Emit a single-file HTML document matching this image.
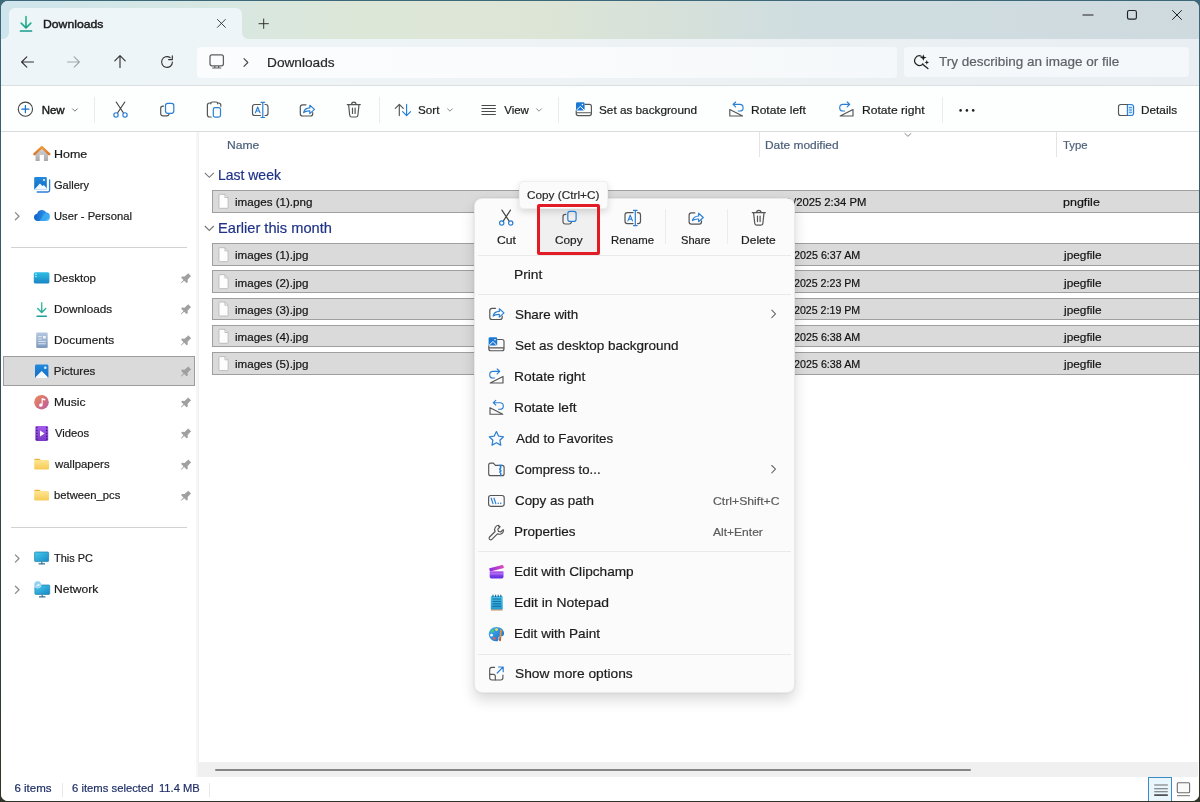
<!DOCTYPE html>
<html lang="en">
<head>
<meta charset="utf-8">
<title>Downloads - File Explorer</title>
<style>
*{box-sizing:border-box;margin:0;padding:0}
html,body{width:1200px;height:802px;overflow:hidden}
body{background:#2f4a4a;font-family:"Liberation Sans",sans-serif;font-size:12px;color:#1b1b1b;position:relative}
#desk{position:absolute;left:0;top:0;width:1200px;height:802px;background:linear-gradient(180deg,#3d687a 0,#34505a 45%,#2f3526 100%)}
#win{position:absolute;left:1px;top:1.300px;width:1198.200px;height:799.500px;border-radius:7px;overflow:hidden;background:#fff}
#o{position:absolute;left:-1px;top:-1.300px;width:1200px;height:802px;will-change:transform}
#o div,#o svg,#o span{position:absolute}
#titlebar{left:0;top:0;width:1200px;height:39px;background:linear-gradient(90deg,#cfe5ed 0,#d5e7e5 14%,#dde7d8 30%,#dde5d6 45%,#d5e0db 58%,#cfdde1 68%,#cfdadf 100%)}
#tab{left:9px;top:8px;width:233px;height:32px;background:#eef5f8;border-radius:6px 6px 0 0}
#navbar{left:0;top:39px;width:1200px;height:47px;background:linear-gradient(90deg,#eef5f8 0,#eef4f5 40%,#e8eef1 100%)}
#addr{left:196.500px;top:46.800px;width:700.500px;height:30.800px;background:linear-gradient(90deg,#fafcfd 0,#f9fbfc 50%,#f5f8fa 100%);border-radius:4px}
#search{left:904px;top:47.200px;width:284.500px;height:29.800px;background:#f4f8fa;border-radius:4px}
#toolbar{left:0;top:85px;width:1200px;height:47px;background:#fdfefe;border-top:1px solid #dcdfe0;border-bottom:1px solid #d9dcde}
#sidebar{left:0;top:132px;width:198px;height:645px;background:#fff}
#content{left:198px;top:132px;width:1002px;height:645px;background:#fff;border-left:1px solid #f0f0f0}
#status{left:0;top:777px;width:1200px;height:25px;background:#fff}
.t{white-space:nowrap;line-height:normal;transform-origin:0 0;-webkit-text-stroke:.2px}
.vsep{width:1px;background:#ebebeb}
svg{overflow:visible}
.k{fill:none;stroke:#3c3c3c;stroke-width:1;stroke-linecap:round;stroke-linejoin:round}
.b{fill:none;stroke:#2b7fd3;stroke-width:1;stroke-linecap:round;stroke-linejoin:round}
</style>
</head>
<body>
<div id="desk"></div>
<div id="win">
<div id="o">
<!-- title bar -->
<div id="titlebar"></div>
<div id="tab"></div>
<div style="left:3px;top:33px;width:6px;height:6px;background:radial-gradient(circle at 0 0,transparent 5.500px,#eef5f8 6px)"></div>
<div style="left:242px;top:33px;width:6px;height:6px;background:radial-gradient(circle at 100% 0,transparent 5.500px,#eef5f8 6px)"></div>
<svg style="left:17.500px;top:14.500px" width="16" height="18" viewBox="0 0 16 18"><defs><linearGradient id="gdl" x1="0" y1="0" x2="0" y2="1"><stop offset="0" stop-color="#2fbf8e"/><stop offset="1" stop-color="#179a8c"/></linearGradient></defs><path d="M8 1.5v11M3.2 8.2L8 13l4.800-4.800M2.500 16h11" fill="none" stroke="url(#gdl)" stroke-width="1.700" stroke-linecap="round" stroke-linejoin="round"/></svg>
<svg style="left:216.800px;top:19.200px" width="8.800" height="8.800" viewBox="0 0 10 10"><path d="M0.500 0.500l9 9M9.500 0.500l-9 9" class="k" style="stroke:#2a2a2a"/></svg>
<svg style="left:259.300px;top:19.200px" width="9.400" height="9.400" viewBox="0 0 10 10"><path d="M5 0v10M0 5h10" class="k" style="stroke:#2a2a2a"/></svg>
<svg style="left:1083.300px;top:13.900px" width="10" height="2" viewBox="0 0 10 2"><path d="M0 1h10" class="k" style="stroke:#222;stroke-width:1.200"/></svg>
<svg style="left:1127.100px;top:9.900px" width="10" height="10" viewBox="0 0 10 10"><rect x="0.500" y="0.500" width="8.900" height="8.600" rx="1.700" class="k" style="stroke:#222;stroke-width:1.150"/></svg>
<svg style="left:1171.800px;top:9.900px" width="10" height="10" viewBox="0 0 10 10"><path d="M0.500 0.500l9 9M9.500 0.500l-9 9" class="k" style="stroke:#222"/></svg>
<!-- nav bar -->
<div id="navbar"></div>
<div id="addr"></div>
<div id="search"></div>
<svg style="left:21px;top:55.600px" width="13" height="12" viewBox="0 0 13 12"><path d="M12.500 6H0.800M5.800 0.800L0.600 6l5.200 5.200" class="k" style="stroke:#333;stroke-width:1.150"/></svg>
<svg style="left:67px;top:55.600px" width="13" height="12" viewBox="0 0 13 12"><path d="M0.500 6h11.700M7.200 0.800L12.400 6l-5.200 5.200" class="k" style="stroke:#a3a8aa;stroke-width:1.150"/></svg>
<svg style="left:114px;top:55px" width="12" height="13" viewBox="0 0 12 13"><path d="M6 12.500V0.800M0.800 5.800L6 0.600l5.200 5.200" class="k" style="stroke:#333;stroke-width:1.150"/></svg>
<svg style="left:160px;top:55px" width="14" height="14" viewBox="0 0 14 14"><path d="M12.400 7a5.400 5.400 0 1 1-2.300-4.420M12.300 0.900v3.700h-3.700" class="k" style="stroke:#333;stroke-width:1.150"/></svg>
<svg style="left:209px;top:54px" width="16" height="15" viewBox="209 54 16 15"><rect x="210" y="54.900" width="13.400" height="10.900" rx="2" class="k" style="stroke:#5e5e5e;stroke-width:1.250"/><path d="M212.200 68h9M214.800 66v1.800M218.600 66v1.800" class="k" style="stroke:#5e5e5e;stroke-width:1.200;stroke-linecap:butt"/></svg>
<svg style="left:243px;top:58px" width="6" height="9" viewBox="0 0 6 9"><path d="M1 0.700L4.800 4.500 1 8.300" class="k" style="stroke:#444;stroke-width:1.100"/></svg>
<svg style="left:913px;top:54px" width="17" height="16" viewBox="913 54 17 16"><path d="M921.300 56.200a4.800 4.800 0 1 0 1.700 7.700" class="k" style="stroke:#222;stroke-width:1.200"/><path d="M922.600 64.200l5.300 4.400" class="k" style="stroke:#222;stroke-width:1.300"/><path d="M923.30 54.30L924.18 56.72L926.60 57.60L924.18 58.48L923.30 60.90L922.42 58.48L920.00 57.60L922.42 56.72z" fill="#1c1c1c"/><path d="M926.80 60.10L927.44 61.76L929.10 62.40L927.44 63.04L926.80 64.70L926.16 63.04L924.50 62.40L926.16 61.76z" fill="#1c1c1c"/></svg>
<!-- toolbar -->
<div id="toolbar"></div>
<svg style="left:0;top:94px" width="1200" height="32" viewBox="0 94 1200 32">
<!-- New -->
<circle cx="25.400" cy="109.200" r="7.100" class="k" style="stroke:#444;stroke-width:1.100"/>
<path d="M25.400 105.700v7M21.900 109.200h7" class="b" style="stroke:#1470c8;stroke-width:1.200"/>
<path d="M72.500 108.800l2.400 2.400 2.400-2.400" class="k" style="stroke:#7a7a7a"/>
<!-- Cut -->
<g id="i-cut">
<path d="M116.200 102l7.300 11M124.800 102l-7.300 11" class="k" style="stroke:#444;stroke-width:1.150"/>
<circle cx="116" cy="114.900" r="2.150" class="b" style="stroke-width:1.200"/><circle cx="125" cy="114.900" r="2.150" class="b" style="stroke-width:1.200"/>
</g>
<!-- Copy -->
<g id="i-copy">
<path d="M163.600 106.200h-0.700a2.200 2.200 0 0 0-2.200 2.200v5.300a2.200 2.200 0 0 0 2.200 2.200h4a2.200 2.200 0 0 0 2.200-2.200" class="k" style="stroke:#555;stroke-width:1.200"/>
<rect x="165.500" y="103.300" width="8.300" height="10" rx="2.200" class="b" style="stroke-width:1.200"/>
</g>
<!-- Paste -->
<path d="M211.200 117h-1.600a2.200 2.200 0 0 1-2.200-2.200v-9.600a2.200 2.200 0 0 1 2.200-2.200h1M217.600 103h1a2.200 2.200 0 0 1 2.200 2.200v1" class="k" style="stroke:#555;stroke-width:1.200"/>
<path d="M210.800 103.800v-0.400a1.400 1.400 0 0 1 1.400-1.400h4a1.400 1.400 0 0 1 1.400 1.400v0.400" class="k" style="stroke:#555;stroke-width:1.200"/>
<rect x="213.300" y="107.700" width="7.200" height="9.400" rx="1.800" class="b" style="stroke-width:1.200"/>
<!-- Rename -->
<g id="i-ren">
<path d="M260.600 104.500h-5.800a2.300 2.300 0 0 0-2.300 2.300v6.400a2.300 2.300 0 0 0 2.300 2.300h5.800M265 104.500h0.700a2.300 2.300 0 0 1 2.300 2.300v6.400a2.300 2.300 0 0 1-2.300 2.300h-0.700" class="k" style="stroke:#555;stroke-width:1.200"/>
<path d="M262.800 102.500v15M261 102.300h3.600M261 117.500h3.600" class="b" style="stroke-width:1.200"/>
<path d="M255.400 112.800l2.300-5.800 2.300 5.800M256.200 111h3" class="b" style="stroke-width:1.100"/>
</g>
<!-- Share -->
<g id="i-share">
<path d="M306 104.800h-3.400a2.300 2.300 0 0 0-2.300 2.300v6.600a2.300 2.300 0 0 0 2.300 2.300h7.800a2.300 2.300 0 0 0 2.300-2.300v-1" class="k" style="stroke:#555;stroke-width:1.200"/>
<path d="M303.600 112.600c0.600-3 2.800-4.600 6.200-4.700v-2.700l4.700 4.200-4.700 4.200v-2.700c-2.800-.1-4.800.4-6.200 1.700z" class="b" style="stroke-width:1.150"/>
</g>
<!-- Delete -->
<g id="i-del">
<path d="M347.300 104.600h13M351.600 104.400a2.200 2.200 0 0 1 4.400 0M348.600 104.800l1.100 10.400a2 2 0 0 0 2 1.800h4.200a2 2 0 0 0 2-1.800l1.100-10.400" class="k" style="stroke:#555;stroke-width:1.200"/>
<path d="M352.500 108v5.500M355.100 108v5.500" class="k" style="stroke:#555;stroke-width:1.200"/>
</g>
<!-- Sort -->
<path d="M399.300 115.600v-11M395.300 108.400l4-4 4 4" class="k" style="stroke:#555;stroke-width:1.150"/>
<path d="M406.600 104.400v11M402.600 111.600l4 4 4-4" class="b" style="stroke:#1f7fd6;stroke-width:1.150"/>
<path d="M447.600 108.800l2.400 2.400 2.400-2.400" class="k" style="stroke:#8a8a8a"/>
<!-- View -->
<path d="M481.500 105.500h14.300M481.500 108.500h14.300M481.500 111.500h14.300M481.500 114.500h14.300" class="k" style="stroke:#4a4a4a;stroke-width:1.100;stroke-linecap:butt"/>
<path d="M536.600 108.800l2.400 2.400 2.400-2.400" class="k" style="stroke:#8a8a8a"/>
<!-- Set as background -->
<g id="i-bg">
<path d="M585 104.400h4.400a2 2 0 0 1 2 2v7.200a2 2 0 0 1-2 2h-11.200a2 2 0 0 1-2-2v-3M576.200 112.700h15.200" class="k" style="stroke:#555;stroke-width:1.150"/>
<rect x="576" y="102.200" width="8.600" height="8.300" rx="1.400" fill="#1a78d2"/>
<path d="M576.600 110l3.700-3.600 3.700 3.600" fill="none" stroke="#fff" stroke-width="1"/><circle cx="582.400" cy="104.600" r="0.800" fill="#fff"/>
</g>
<!-- Rotate left -->
<g id="i-rl">
<path d="M729.800 109.400v6.600h12.800z" class="k" style="stroke:#555;stroke-width:1.150"/>
<path d="M733.300 104.400h6.500a3.300 3.300 0 0 1 0 6.600h-1.500M735.600 102l-2.500 2.400 2.500 2.400" class="b" style="stroke-width:1.150"/>
</g>
<!-- Rotate right -->
<g id="i-rr">
<path d="M853 109.400v6.600h-12.800z" class="k" style="stroke:#555;stroke-width:1.150"/>
<path d="M849.500 104.400h-6.500a3.300 3.300 0 0 0 0 6.600h1.500M847.200 102l2.500 2.400-2.500 2.400" class="b" style="stroke-width:1.150"/>
</g>
<!-- more -->
<circle cx="960.600" cy="110.400" r="1.300" fill="#222"/><circle cx="966.900" cy="110.400" r="1.300" fill="#222"/><circle cx="973.200" cy="110.400" r="1.300" fill="#222"/>
<!-- Details -->
<path d="M1127.400 104.500h3.900a2.300 2.300 0 0 1 2.300 2.300v6.400a2.300 2.300 0 0 1-2.300 2.300h-3.900z" fill="#d6ebfb" stroke="#2b7fd3" stroke-width="1.150"/>
<path d="M1127.400 104.500h-6.600a2.300 2.300 0 0 0-2.300 2.300v6.400a2.300 2.300 0 0 0 2.300 2.300h6.600" class="k" style="stroke:#555;stroke-width:1.150"/>
<path d="M1129.300 107.700h2.300M1129.300 110h2.300M1129.300 112.300h2.300" class="b" style="stroke-width:0.900"/>
</svg>
<div class="vsep" style="left:94px;top:97px;height:26px"></div>
<div class="vsep" style="left:379px;top:97px;height:26px"></div>
<div class="vsep" style="left:558px;top:97px;height:26px"></div>
<div class="vsep" style="left:942px;top:97px;height:26px;background:#ececec"></div>

<!-- sidebar -->
<div id="sidebar"></div>
<div style="left:196px;top:132px;width:3px;height:645px;background:#f6f6f6"></div>
<div style="left:3px;top:356px;width:192px;height:30px;background:#dadada;border:1px solid #9c9c9c"></div>
<div style="left:11px;top:247px;width:176px;height:1px;background:#d2d2d2"></div>
<div style="left:11px;top:527px;width:176px;height:1px;background:#d2d2d2"></div>
<svg style="left:0;top:132px" width="198" height="480" viewBox="0 132 198 480">
<defs>
<linearGradient id="gor" x1="0" y1="0" x2="0" y2="1"><stop offset="0" stop-color="#f0993a"/><stop offset="1" stop-color="#d8742a"/></linearGradient>
<linearGradient id="ggr" x1="0" y1="0" x2="0" y2="1"><stop offset="0" stop-color="#d6d6d6"/><stop offset="1" stop-color="#a9a9a9"/></linearGradient>
<linearGradient id="gbl" x1="0" y1="0" x2="0" y2="1"><stop offset="0" stop-color="#2489dc"/><stop offset="1" stop-color="#0f6cc4"/></linearGradient>
<linearGradient id="gcl" x1="0" y1="0" x2="1" y2="0"><stop offset="0" stop-color="#0f5fc8"/><stop offset="1" stop-color="#38a4f2"/></linearGradient>
<linearGradient id="gdk" x1="0" y1="0" x2="0" y2="1"><stop offset="0" stop-color="#2fbfe6"/><stop offset="1" stop-color="#1a86c4"/></linearGradient>
<linearGradient id="gdn" x1="0" y1="0" x2="0" y2="1"><stop offset="0" stop-color="#3cc79a"/><stop offset="1" stop-color="#1f9f98"/></linearGradient>
<linearGradient id="gdc" x1="0" y1="0" x2="0" y2="1"><stop offset="0" stop-color="#b4c8df"/><stop offset="1" stop-color="#7d99bc"/></linearGradient>
<linearGradient id="gmu" x1="0" y1="0" x2="1" y2="1"><stop offset="0" stop-color="#ee8a52"/><stop offset="1" stop-color="#b85aa6"/></linearGradient>
<linearGradient id="gvi" x1="0" y1="0" x2="0" y2="1"><stop offset="0" stop-color="#a45cec"/><stop offset="1" stop-color="#7a38c6"/></linearGradient>
<linearGradient id="gfo" x1="0" y1="0" x2="0" y2="1"><stop offset="0" stop-color="#ffe592"/><stop offset="1" stop-color="#f6cb55"/></linearGradient>
<linearGradient id="gpc" x1="0" y1="0" x2="1" y2="1"><stop offset="0" stop-color="#45cdee"/><stop offset="1" stop-color="#1a87c6"/></linearGradient>
<g id="pin"><path d="M188.200 273.200l3 3-1 .600-2.600 2.900.2 2.600-1.300.7-2.300-2.300-2.800 2.600-.5-.5 2.600-2.800-2.300-2.300.7-1.300 2.600.2 2.900-2.600z" fill="#a0a0a0"/></g>
<g id="fold"><path d="M34.200 460a1.300 1.300 0 0 1 1.300-1.300h3.900l1.500 1.400h-6.700z" fill="#e9b53a"/><path d="M34.200 460h13.700a1.100 1.100 0 0 1 1.100 1.100v7.400a1.100 1.100 0 0 1-1.100 1.100h-12.600a1.100 1.100 0 0 1-1.100-1.100z" fill="url(#gfo)"/></g>
<g id="chev"><path d="M15.400 212.600l3.600 3.600-3.600 3.600" fill="none" stroke="#8c8c8c" stroke-width="1.300" stroke-linecap="round" stroke-linejoin="round"/></g>
</defs>
<!-- Home -->
<path d="M35.500 153.300l6.300-5.600 6.300 5.600v7.100a.7.700 0 0 1-.7.700h-11.200a.7.700 0 0 1-.7-.7z" fill="url(#ggr)"/><rect x="39.700" y="154.800" width="4.200" height="6.300" fill="#fff"/>
<path d="M34.400 154.200l7.400-7 7.400 7" fill="none" stroke="url(#gor)" stroke-width="2.500" stroke-linecap="round" stroke-linejoin="round"/>
<!-- Gallery -->
<path d="M37.200 192h10.600a1.800 1.800 0 0 0 1.800-1.800v-10.400" fill="none" stroke="#2a7fd6" stroke-width="1.300" stroke-linecap="round"/>
<rect x="34.200" y="177" width="12.600" height="12.800" rx="1.300" fill="url(#gbl)"/>
<path d="M34.600 189.200l5.300-5.600 2.600 2.500 1.300-1.100 3 3.200v.5a1.100 1.100 0 0 1-1.100 1.100h-10a1.100 1.100 0 0 1-1.100-.6z" fill="#f2f8ff"/><circle cx="44" cy="180" r="1.100" fill="#e6f3ff"/>
<!-- OneDrive -->
<path d="M37.700 221a3.700 3.700 0 0 1-.6-7.350 5.100 5.100 0 0 1 9.300-1.150 3.700 3.700 0 0 1 .5 7.300 3 3 0 0 1-1.600 1.200z" fill="url(#gcl)"/>
<path d="M39.500 221l4.200-6.800a3.700 3.700 0 0 1 5.900 3.600 3 3 0 0 1-2.700 3.200z" fill="#3fb0f6" opacity=".75"/>
<use href="#chev"/>
<!-- Desktop -->
<rect x="33.800" y="272.200" width="15.600" height="11.200" rx="1.500" fill="url(#gdk)"/><rect x="35" y="273.500" width="1.800" height="1.500" fill="#8fe4f8"/><rect x="35" y="276" width="1.800" height="1.200" fill="#8fe4f8"/>
<!-- Downloads -->
<path d="M41.700 302.800v9.400M37.700 308.600l4 4 4-4M37 316.200h9.400" fill="none" stroke="url(#gdn)" stroke-width="1.400" stroke-linecap="round" stroke-linejoin="round"/>
<!-- Documents -->
<rect x="36.200" y="332.600" width="11.500" height="15.400" rx="1.200" fill="url(#gdc)"/><path d="M38.200 336.600h3.600M38.200 339h3.600M38.200 341.400h7.500M38.200 343.800h7.500" stroke="#e8eff8" stroke-width=".9" fill="none"/><rect x="43" y="336" width="2.800" height="2.500" fill="#f2f6fb"/>
<!-- Pictures -->
<rect x="35" y="364.600" width="13.400" height="13.400" rx="1.300" fill="url(#gbl)"/>
<path d="M35.400 377.300l6.300-6.400 6.300 6.400a1.300 1.300 0 0 1-.9.700h-10.800a1.300 1.300 0 0 1-.9-.7z" fill="#f4f9ff"/><circle cx="45.300" cy="367.700" r="1.200" fill="#e9f4ff"/>
<!-- Music -->
<circle cx="41.500" cy="402.200" r="7.300" fill="url(#gmu)"/><path d="M42.700 405.100a1.800 1.600 0 1 1-1.100-1.500v-5.500l3.700.9v1.600l-2.600-.6z" fill="#fff"/>
<!-- Videos -->
<rect x="35.300" y="426" width="12.900" height="15" rx="1.400" fill="url(#gvi)"/><path d="M40 430.500v6l4.600-3z" fill="#fff"/>
<path d="M36.200 427.600h1.300M36.200 430.500h1.300M36.200 433.400h1.300M36.200 436.300h1.300M36.200 439.200h1.300M46 427.600h1.300M46 430.500h1.300M46 433.400h1.300M46 436.300h1.300M46 439.200h1.300" stroke="#3a1878" stroke-width="1.300" fill="none"/>
<!-- folders -->
<use href="#fold"/><use href="#fold" y="31"/>
<!-- This PC -->
<path d="M38.600 563.900h6.400M41.800 561.600v2.200" stroke="#3a6e88" stroke-width="1.100" fill="none"/><rect x="34.600" y="552" width="14" height="9.600" rx=".8" fill="url(#gpc)" stroke="#1d7fa8" stroke-width=".7"/>
<use href="#chev" y="342.300"/>
<!-- Network -->
<path d="M39 596.900h6.400M42.200 594.400v2.400" stroke="#3a6e88" stroke-width="1.100" fill="none"/><rect x="34.900" y="585" width="14.800" height="9.400" rx=".8" fill="url(#gpc)" stroke="#1d7fa8" stroke-width=".7"/>
<circle cx="37.700" cy="584.600" r="3.500" fill="#8fd0f2" stroke="#d8f0fc" stroke-width=".6"/><path d="M35.600 586.400l3-2.800 1.500 1.800z" fill="#e8f7ff"/>
<use href="#chev" y="373.600"/>
<!-- pins -->
<use href="#pin"/><use href="#pin" y="31.070"/><use href="#pin" y="62.140"/><use href="#pin" y="93.200"/><use href="#pin" y="124.300"/><use href="#pin" y="155.350"/><use href="#pin" y="186.400"/><use href="#pin" y="217.500"/>
</svg>

<!-- content pane -->
<div id="content"></div>
<div style="left:759px;top:132px;width:1px;height:24.500px;background:#e4e4e4"></div>
<div style="left:1056px;top:132px;width:1px;height:24.500px;background:#e4e4e4"></div>
<div style="left:212px;top:189.9px;width:990px;height:22.8px;background:#dadada;border:1px solid #9f9f9f"></div>
<div style="left:212px;top:243.3px;width:990px;height:22.5px;background:#dadada;border:1px solid #9f9f9f"></div>
<div style="left:212px;top:270.3px;width:990px;height:22.5px;background:#dadada;border:1px solid #9f9f9f"></div>
<div style="left:212px;top:297.6px;width:990px;height:22.5px;background:#dadada;border:1px solid #9f9f9f"></div>
<div style="left:212px;top:324.9px;width:990px;height:22.5px;background:#dadada;border:1px solid #9f9f9f"></div>
<div style="left:212px;top:352.2px;width:990px;height:22.5px;background:#dadada;border:1px solid #9f9f9f"></div>
<svg style="left:198px;top:132px" width="1002" height="260" viewBox="198 132 1002 260">
<defs><g id="doc"><path d="M219.500 194.300h5.400l3.200 3.200v10.300a.5.500 0 0 1-.5.500h-8.100a.5.500 0 0 1-.5-.5v-13a.5.500 0 0 1 .5-.5z" fill="#fdfdfd" stroke="#b9b9b9" stroke-width=".9"/><path d="M224.900 194.500v3h3" fill="none" stroke="#b9b9b9" stroke-width=".9"/></g></defs>
<path d="M904.600 133.300l3.300 3 3.300-3" fill="none" stroke="#8a8a8a" stroke-width="1"/>
<path d="M204.800 172.800l4.500 4.500 4.500-4.500" fill="none" stroke="#767676" stroke-width="1.100"/>
<path d="M204.800 226l4.500 4.500 4.500-4.500" fill="none" stroke="#767676" stroke-width="1.100"/>
<use href="#doc" y="0.0"/>
<use href="#doc" y="53.4"/>
<use href="#doc" y="80.4"/>
<use href="#doc" y="107.7"/>
<use href="#doc" y="135.0"/>
<use href="#doc" y="162.3"/>
</svg>

<!-- scrollbar + status bar -->
<div style="left:199px;top:762px;width:999px;height:15px;background:#f0f0f0"></div>
<div style="left:215px;top:768.500px;width:756px;height:2px;background:#858585;border-radius:1px"></div>
<div id="status"></div>
<div style="left:62px;top:783px;width:1px;height:14px;background:#e8e8e8"></div>
<div style="left:209px;top:783px;width:1px;height:14px;background:#e8e8e8"></div>
<div style="left:1148px;top:777.300px;width:24px;height:26px;background:#eaf6fd;border:1.600px solid #3a8cc8"></div>
<svg style="left:1148px;top:778px" width="50" height="22" viewBox="1148 778 50 22">
<path d="M1154.200 785h13.600M1154.200 788.700h13.600M1154.200 791.800h13.600" fill="none" stroke="#6a6a6a" stroke-width="1.100"/><path d="M1154.200 795.100h13.600" fill="none" stroke="#333" stroke-width="1.500"/>
<rect x="1177.300" y="782.800" width="12.300" height="10" rx="1" fill="#fafafa" stroke="#6e6e6e" stroke-width="1.100"/><path d="M1177 795.700h12.900" fill="none" stroke="#6e6e6e" stroke-width="1"/>
</svg>

<!-- labels -->
<span class="t" style="left:42.50px;top:17.9px;font-size:11.5px;color:#1a1a1a;transform:scaleX(1.062);-webkit-text-stroke:0.42px #1a1a1a;">Downloads</span>
<span class="t" style="left:266.78px;top:54.8px;font-size:13px;color:#2a2a2a;transform:scaleX(1.052);">Downloads</span>
<span class="t" style="left:938.95px;top:53.8px;font-size:13.5px;color:#5c6266;">Try describing an image or file</span>
<span class="t" style="left:41.66px;top:104.4px;font-size:11.5px;color:#1a1a1a;-webkit-text-stroke:0.42px #1a1a1a;">New</span>
<span class="t" style="left:418.49px;top:104.4px;font-size:11.5px;transform:scaleX(1.014);">Sort</span>
<span class="t" style="left:504.20px;top:104.4px;font-size:11.5px;">View</span>
<span class="t" style="left:599.19px;top:104.4px;font-size:11.5px;transform:scaleX(1.022);">Set as background</span>
<span class="t" style="left:751.42px;top:104.4px;font-size:11.5px;transform:scaleX(1.045);">Rotate left</span>
<span class="t" style="left:861.61px;top:104.4px;font-size:11.5px;transform:scaleX(1.052);">Rotate right</span>
<span class="t" style="left:1141.34px;top:104.4px;font-size:11.5px;transform:scaleX(1.025);">Details</span>
<span class="t" style="left:53.69px;top:147.5px;font-size:11.5px;transform:scaleX(1.083);">Home</span>
<span class="t" style="left:54.16px;top:178.6px;font-size:11.5px;transform:scaleX(0.962);">Gallery</span>
<span class="t" style="left:53.85px;top:209.7px;font-size:11.5px;transform:scaleX(0.975);">User - Personal</span>
<span class="t" style="left:53.76px;top:271.8px;font-size:11.5px;">Desktop</span>
<span class="t" style="left:53.74px;top:302.9px;font-size:11.5px;transform:scaleX(1.022);">Downloads</span>
<span class="t" style="left:53.73px;top:334.0px;font-size:11.5px;transform:scaleX(1.034);">Documents</span>
<span class="t" style="left:53.76px;top:365.1px;font-size:11.5px;">Pictures</span>
<span class="t" style="left:53.72px;top:396.1px;font-size:11.5px;transform:scaleX(1.051);">Music</span>
<span class="t" style="left:54.70px;top:427.2px;font-size:11.5px;transform:scaleX(0.977);">Videos</span>
<span class="t" style="left:54.76px;top:458.3px;font-size:11.5px;transform:scaleX(0.993);">wallpapers</span>
<span class="t" style="left:54.03px;top:489.4px;font-size:11.5px;transform:scaleX(0.979);">between_pcs</span>
<span class="t" style="left:54.46px;top:551.5px;font-size:11.5px;transform:scaleX(0.952);">This PC</span>
<span class="t" style="left:53.72px;top:582.6px;font-size:11.5px;transform:scaleX(1.048);">Network</span>
<span class="t" style="left:226.81px;top:138.7px;font-size:11.5px;color:#4c607a;transform:scaleX(1.052);">Name</span>
<span class="t" style="left:765.23px;top:138.7px;font-size:11.5px;color:#4c607a;transform:scaleX(1.037);">Date modified</span>
<span class="t" style="left:1063.35px;top:138.7px;font-size:11.5px;color:#4c607a;transform:scaleX(0.987);">Type</span>
<span class="t" style="left:218.19px;top:165.7px;font-size:15px;color:#1e3287;transform:scaleX(0.931);">Last week</span>
<span class="t" style="left:218.14px;top:219.1px;font-size:15px;color:#1e3287;transform:scaleX(0.976);">Earlier this month</span>
<span class="t" style="left:234.74px;top:195.6px;font-size:11.5px;color:#111;transform:scaleX(1.010);">images (1).png</span>
<span class="t" style="left:765.63px;top:195.6px;font-size:11.5px;color:#111;transform:scaleX(1.133);">8/19</span>
<span class="t" style="left:792.90px;top:195.6px;font-size:11.5px;color:#111;transform:scaleX(0.980);">/2025 2:34 PM</span>
<span class="t" style="left:1062.85px;top:195.6px;font-size:11.5px;color:#111;transform:scaleX(1.087);">pngfile</span>
<span class="t" style="left:234.74px;top:249.4px;font-size:11.5px;color:#111;transform:scaleX(1.007);">images (1).jpg</span>
<span class="t" style="left:765.60px;top:249.4px;font-size:11.5px;color:#111;transform:scaleX(1.200);">8/6/</span>
<span class="t" style="left:794.27px;top:249.4px;font-size:11.5px;color:#111;transform:scaleX(0.934);">2025 6:37 AM</span>
<span class="t" style="left:1063.92px;top:249.4px;font-size:11.5px;color:#111;transform:scaleX(1.030);">jpegfile</span>
<span class="t" style="left:234.74px;top:276.6px;font-size:11.5px;color:#111;transform:scaleX(1.007);">images (2).jpg</span>
<span class="t" style="left:765.60px;top:276.6px;font-size:11.5px;color:#111;transform:scaleX(1.200);">8/5/</span>
<span class="t" style="left:794.28px;top:276.6px;font-size:11.5px;color:#111;transform:scaleX(0.925);">2025 2:23 PM</span>
<span class="t" style="left:1063.92px;top:276.6px;font-size:11.5px;color:#111;transform:scaleX(1.030);">jpegfile</span>
<span class="t" style="left:234.74px;top:303.7px;font-size:11.5px;color:#111;transform:scaleX(1.007);">images (3).jpg</span>
<span class="t" style="left:765.60px;top:303.7px;font-size:11.5px;color:#111;transform:scaleX(1.200);">8/5/</span>
<span class="t" style="left:794.28px;top:303.7px;font-size:11.5px;color:#111;transform:scaleX(0.925);">2025 2:19 PM</span>
<span class="t" style="left:1063.92px;top:303.7px;font-size:11.5px;color:#111;transform:scaleX(1.030);">jpegfile</span>
<span class="t" style="left:234.74px;top:330.9px;font-size:11.5px;color:#111;transform:scaleX(1.007);">images (4).jpg</span>
<span class="t" style="left:765.60px;top:330.9px;font-size:11.5px;color:#111;transform:scaleX(1.200);">8/4/</span>
<span class="t" style="left:794.27px;top:330.9px;font-size:11.5px;color:#111;transform:scaleX(0.934);">2025 6:38 AM</span>
<span class="t" style="left:1063.92px;top:330.9px;font-size:11.5px;color:#111;transform:scaleX(1.030);">jpegfile</span>
<span class="t" style="left:234.74px;top:358.0px;font-size:11.5px;color:#111;transform:scaleX(1.007);">images (5).jpg</span>
<span class="t" style="left:765.60px;top:358.0px;font-size:11.5px;color:#111;transform:scaleX(1.200);">8/4/</span>
<span class="t" style="left:794.27px;top:358.0px;font-size:11.5px;color:#111;transform:scaleX(0.934);">2025 6:38 AM</span>
<span class="t" style="left:1063.92px;top:358.0px;font-size:11.5px;color:#111;transform:scaleX(1.030);">jpegfile</span>
<span class="t" style="left:14.44px;top:782.3px;font-size:11.5px;color:#1f2f68;">6 items</span>
<span class="t" style="left:72.15px;top:782.3px;font-size:11.5px;color:#1f2f68;transform:scaleX(0.981);">6 items selected</span>
<span class="t" style="left:159.15px;top:782.3px;font-size:11.5px;color:#1f2f68;transform:scaleX(0.969);">11.4 MB</span>
<!-- context menu -->
<div style="left:474px;top:198px;width:320.500px;height:494.600px;background:#fbfbfb;border:1px solid rgba(0,0,0,.07);border-radius:8px;box-shadow:0 7px 14px rgba(0,0,0,.15),0 0 3px rgba(0,0,0,.07)"></div>
<div style="left:540px;top:206px;width:58px;height:47px;background:#f0f0f0"></div>
<div style="left:478px;top:255px;width:312.500px;height:1px;background:#e9e9e9"></div>
<div style="left:478px;top:293.500px;width:312.500px;height:1px;background:#e9e9e9"></div>
<div style="left:478px;top:551px;width:312.500px;height:1px;background:#e9e9e9"></div>
<div style="left:478px;top:653.500px;width:312.500px;height:1px;background:#e9e9e9"></div>
<div style="left:664.500px;top:209px;width:1px;height:35px;background:#ececec"></div>
<div style="left:727px;top:209px;width:1px;height:35px;background:#ececec"></div>
<!-- tooltip -->
<div style="left:519px;top:181px;width:89px;height:27.500px;background:#fbfbfb;border:1px solid #efefef;border-radius:4px;box-shadow:0 3px 7px rgba(0,0,0,.14)"></div>
<!-- highlight box -->
<div style="left:537.200px;top:204.200px;width:63.200px;height:50.400px;border:3.200px solid #e21b24;border-radius:2px"></div>
<svg style="left:474px;top:198px" width="320" height="494" viewBox="474 198 320 494">
<use href="#i-cut" x="385.700" y="108.100"/>
<use href="#i-copy" x="402.300" y="108.100"/>
<use href="#i-ren" x="372.500" y="108.100"/>
<use href="#i-share" x="388.800" y="108.100"/>
<use href="#i-del" x="405" y="108.100"/>
<use href="#i-share" x="189.500" y="203.500"/>
<use href="#i-bg" x="-87.400" y="235.100"/>
<use href="#i-rr" x="-350" y="267"/>
<use href="#i-rl" x="-239.800" y="298.300"/>
<!-- submenu chevrons -->
<path d="M771.800 310.200l3.700 3.700-3.700 3.700M771.800 465.500l3.700 3.700-3.700 3.700" fill="none" stroke="#6a6a6a" stroke-width="1.100" stroke-linecap="round" stroke-linejoin="round"/>
<!-- star -->
<path d="M496.400 431.600l2.150 4.500 4.950.65-3.600 3.450.9 4.900-4.400-2.400-4.400 2.400.9-4.900-3.600-3.450 4.950-.65z" fill="none" stroke="#2b7fd3" stroke-width="1.200" stroke-linejoin="round"/>
<!-- compress -->
<path d="M499.300 465.400h2.800a2 2 0 0 1 2 2v6.300a2 2 0 0 1-2 2h-11.400a2 2 0 0 1-2-2v-8.500a2 2 0 0 1 2-2h2.700l2 2.200h3.900" class="k" style="stroke:#555;stroke-width:1.150"/>
<path d="M499.300 465.600h2.600M500.600 465.600v2.400l-1 1.300 1.400 1.400-1.200 1.400 1 1.300v2.200" class="b" style="stroke-width:1.500"/>
<!-- copy as path -->
<rect x="488.600" y="495.500" width="15.600" height="10.800" rx="2.200" class="k" style="stroke:#555;stroke-width:1.150"/>
<path d="M491.200 498.200l1.800 5.400M494 498.200l1.800 5.400" class="b" style="stroke-width:1.200"/><path d="M498.200 503.300h.1M500.700 503.300h.1" class="b" style="stroke-width:1.400"/>
<!-- properties wrench -->
<path d="M498.600 525.300a4.300 4.300 0 0 0-3.500 6.200l-5.500 5.500a1.600 1.600 0 0 0 2.300 2.300l5.500-5.500a4.300 4.300 0 0 0 6.200-3.500 .5 .5 0 0 0-.8-.4l-2.100 2.100-2.300-.6-.6-2.300 2.100-2.100a.5 .5 0 0 0-.3-.8 4.300 4.300 0 0 0-1 .1z" class="k" style="stroke:#555;stroke-width:1.150"/>
<!-- clipchamp -->
<defs>
<linearGradient id="gc1" x1="0" y1="0" x2="1" y2="0"><stop offset="0" stop-color="#8a2be8"/><stop offset="1" stop-color="#e24ab8"/></linearGradient>
<linearGradient id="gc2" x1="0" y1="0" x2="0" y2="1"><stop offset="0" stop-color="#b45af0"/><stop offset="1" stop-color="#5a2ee0"/></linearGradient>
<linearGradient id="gnp" x1="0" y1="0" x2="0" y2="1"><stop offset="0" stop-color="#48c2ec"/><stop offset="1" stop-color="#219cd2"/></linearGradient>
<linearGradient id="gpt" x1="0" y1="0" x2="1" y2="1"><stop offset="0" stop-color="#49b6f0"/><stop offset="1" stop-color="#1668c8"/></linearGradient>
</defs>
<path d="M489.600 568.300l12.600-3.300a1 1 0 0 1 1.200.7l.5 2.300-13.700 3.500-.9-2a.9.900 0 0 1 .3-1.200z" fill="url(#gc1)"/>
<path d="M489.700 571.300h13.800v5.400a1.700 1.700 0 0 1-1.700 1.700h-10.400a1.700 1.700 0 0 1-1.700-1.700z" fill="url(#gc2)"/><path d="M489.700 573.900h13.800" stroke="#e2c2ff" stroke-width=".7" opacity=".6"/>
<!-- notepad -->
<rect x="490.800" y="596" width="11.900" height="13.700" rx="1" fill="url(#gnp)"/><path d="M490.900 609.400h11.700v.6a.6.600 0 0 1-.6.600h-10.500a.6.600 0 0 1-.6-.6z" fill="#c98a5a"/>
<path d="M492.500 599h8.500M492.500 601.400h8.500M492.500 603.800h8.500M492.500 606.200h8.500" stroke="#0f5688" stroke-width=".8" fill="none"/>
<path d="M493 594.800v2.200M495.600 594.800v2.200M498.200 594.800v2.200M500.800 594.800v2.200" stroke="#1d5f8c" stroke-width="1.100" fill="none"/>
<!-- paint -->
<path d="M496.400 626.900c4.300 0 7.700 2.800 7.700 6.400 0 2.400-1.800 3.400-3.600 3.200-1.500-.2-2.300.6-2 1.900.4 1.500-.5 2.900-2.400 2.900-4.200 0-7.300-3.200-7.300-7.200 0-4 3.400-7.200 7.600-7.200z" fill="url(#gpt)"/>
<circle cx="492.500" cy="631" r="1.400" fill="#3ed06a"/><circle cx="496.500" cy="629.600" r="1.400" fill="#ffd84a"/><circle cx="491.600" cy="635.200" r="1.400" fill="#f2f6fa"/><circle cx="494.200" cy="638.400" r="1.300" fill="#f05a4a"/>
<path d="M500.200 629.500l1.700.3-.8 7.600-1.600-.2z" fill="#e8923a"/><path d="M499.400 637l1.900.3-.5 3.600-1.300.4-.5-1z" fill="#c05a2a"/>
<!-- show more -->
<path d="M494.500 667.400h-2.600a2.200 2.200 0 0 0-2.200 2.200v8.200a2.200 2.200 0 0 0 2.200 2.200h8.800a2.200 2.200 0 0 0 2.200-2.200v-2.800" class="k" style="stroke:#555;stroke-width:1.150"/>
<path d="M489.900 674.300h3.600a1.800 1.800 0 0 1 1.800 1.800v3.700" class="k" style="stroke:#555;stroke-width:1.150"/>
<path d="M497.200 673l5.800-5.800M498.500 667h4.700v4.700" class="b" style="stroke-width:1.200"/>
</svg>

<!-- menu labels -->
<span class="t" style="left:527.02px;top:189.0px;font-size:11.5px;color:#2a2a2a;transform:scaleX(1.025);">Copy (Ctrl+C)</span>
<span class="t" style="left:497.10px;top:233.7px;font-size:11.5px;color:#1c1c1c;transform:scaleX(1.060);">Cut</span>
<span class="t" style="left:555.42px;top:233.7px;font-size:11.5px;color:#1c1c1c;transform:scaleX(1.027);">Copy</span>
<span class="t" style="left:610.77px;top:233.7px;font-size:11.5px;color:#1c1c1c;transform:scaleX(0.989);">Rename</span>
<span class="t" style="left:681.22px;top:233.7px;font-size:11.5px;color:#1c1c1c;transform:scaleX(0.962);">Share</span>
<span class="t" style="left:741.02px;top:233.7px;font-size:11.5px;color:#1c1c1c;transform:scaleX(1.046);">Delete</span>
<span class="t" style="left:514.37px;top:266.9px;font-size:13px;color:#1c1c1c;transform:scaleX(1.062);">Print</span>
<span class="t" style="left:514.92px;top:306.7px;font-size:13px;color:#1c1c1c;transform:scaleX(1.029);">Share with</span>
<span class="t" style="left:514.92px;top:337.7px;font-size:13px;color:#1c1c1c;transform:scaleX(1.038);">Set as desktop background</span>
<span class="t" style="left:514.37px;top:368.7px;font-size:13px;color:#1c1c1c;transform:scaleX(1.061);">Rotate right</span>
<span class="t" style="left:514.38px;top:399.7px;font-size:13px;color:#1c1c1c;transform:scaleX(1.056);">Rotate left</span>
<span class="t" style="left:515.50px;top:430.7px;font-size:13px;color:#1c1c1c;transform:scaleX(1.027);">Add to Favorites</span>
<span class="t" style="left:514.87px;top:461.7px;font-size:13px;color:#1c1c1c;transform:scaleX(1.012);">Compress to...</span>
<span class="t" style="left:514.86px;top:492.7px;font-size:13px;color:#1c1c1c;transform:scaleX(1.029);">Copy as path</span>
<span class="t" style="left:514.40px;top:523.7px;font-size:13px;color:#1c1c1c;transform:scaleX(1.036);">Properties</span>
<span class="t" style="left:514.39px;top:564.3px;font-size:13px;color:#1c1c1c;transform:scaleX(1.048);">Edit with Clipchamp</span>
<span class="t" style="left:514.37px;top:595.3px;font-size:13px;color:#1c1c1c;transform:scaleX(1.067);">Edit in Notepad</span>
<span class="t" style="left:514.39px;top:626.3px;font-size:13px;color:#1c1c1c;transform:scaleX(1.044);">Edit with Paint</span>
<span class="t" style="left:514.90px;top:666.3px;font-size:13px;color:#1c1c1c;transform:scaleX(1.058);">Show more options</span>
<span class="t" style="left:712.80px;top:494.5px;font-size:11.5px;color:#5c5c5c;transform:scaleX(1.063);">Ctrl+Shift+C</span>
<span class="t" style="left:713.40px;top:525.5px;font-size:11.5px;color:#5c5c5c;transform:scaleX(1.047);">Alt+Enter</span>
</div>
</div>
</body>
</html>
